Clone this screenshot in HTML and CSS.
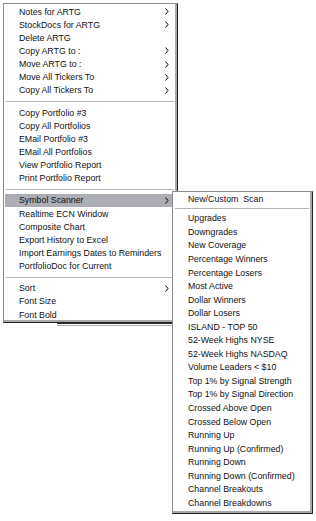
FILE: index.html
```html
<!DOCTYPE html>
<html lang="en">
  <head>
    <meta charset="UTF-8" />
    <meta name="viewport" content="width=device-width, initial-scale=1.0" />
    <title>Portfolio Context Menu</title>
    <link rel="stylesheet" href="styles.css">
  </head>
  <body>
    <div class="screen">
      <div class="backdrop-edge"></div>

      <div class="menu main-menu">
        <div class="item">Notes for ARTG<span class="arrow"><svg width="4" height="7" viewBox="0 0 4 7"><polyline points="0.5,0.5 3,3.5 0.5,6.5" /></svg></span></div>
        <div class="item">StockDocs for ARTG<span class="arrow"><svg width="4" height="7" viewBox="0 0 4 7"><polyline points="0.5,0.5 3,3.5 0.5,6.5" /></svg></span></div>
        <div class="item">Delete ARTG</div>
        <div class="item">Copy ARTG to :<span class="arrow"><svg width="4" height="7" viewBox="0 0 4 7"><polyline points="0.5,0.5 3,3.5 0.5,6.5" /></svg></span></div>
        <div class="item">Move ARTG to :<span class="arrow"><svg width="4" height="7" viewBox="0 0 4 7"><polyline points="0.5,0.5 3,3.5 0.5,6.5" /></svg></span></div>
        <div class="item">Move All Tickers To<span class="arrow"><svg width="4" height="7" viewBox="0 0 4 7"><polyline points="0.5,0.5 3,3.5 0.5,6.5" /></svg></span></div>
        <div class="item">Copy All Tickers To<span class="arrow"><svg width="4" height="7" viewBox="0 0 4 7"><polyline points="0.5,0.5 3,3.5 0.5,6.5" /></svg></span></div>
        <div class="sep"></div>
        <div class="item">Copy Portfolio #3</div>
        <div class="item">Copy All Portfolios</div>
        <div class="item">EMail Portfolio #3</div>
        <div class="item">EMail All Portfolios</div>
        <div class="item">View Portfolio Report</div>
        <div class="item">Print Portfolio Report</div>
        <div class="sep"></div>
        <div class="item active">Symbol Scanner<span class="arrow"><svg width="4" height="7" viewBox="0 0 4 7"><polyline points="0.5,0.5 3,3.5 0.5,6.5" /></svg></span></div>
        <div class="item">Realtime ECN Window</div>
        <div class="item">Composite Chart</div>
        <div class="item">Export History to Excel</div>
        <div class="item">Import Earnings Dates to Reminders</div>
        <div class="item">PortfolioDoc for Current</div>
        <div class="sep"></div>
        <div class="item">Sort<span class="arrow"><svg width="4" height="7" viewBox="0 0 4 7"><polyline points="0.5,0.5 3,3.5 0.5,6.5" /></svg></span></div>
        <div class="item">Font Size</div>
        <div class="item">Font Bold</div>
      </div>

      <div class="menu sub-menu">
        <div class="item keep-spaces">New/Custom  Scan</div>
        <div class="sep"></div>
        <div class="item">Upgrades</div>
        <div class="item">Downgrades</div>
        <div class="item">New Coverage</div>
        <div class="item">Percentage Winners</div>
        <div class="item">Percentage Losers</div>
        <div class="item">Most Active</div>
        <div class="item">Dollar Winners</div>
        <div class="item">Dollar Losers</div>
        <div class="item">ISLAND - TOP 50</div>
        <div class="item">52-Week Highs NYSE</div>
        <div class="item">52-Week Highs NASDAQ</div>
        <div class="item">Volume Leaders &lt; $10</div>
        <div class="item">Top 1% by Signal Strength</div>
        <div class="item">Top 1% by Signal Direction</div>
        <div class="item">Crossed Above Open</div>
        <div class="item">Crossed Below Open</div>
        <div class="item">Running Up</div>
        <div class="item">Running Up (Confirmed)</div>
        <div class="item">Running Down</div>
        <div class="item">Running Down (Confirmed)</div>
        <div class="item">Channel Breakouts</div>
        <div class="item">Channel Breakdowns</div>
      </div>
    </div>
  </body>
</html>
```

FILE: styles.css
```css
body {
  margin: 0;
  background-color: #ffffff;
  font-family: "Liberation Sans", Arial, sans-serif;
  font-size: 8.8px;
  color: #111111;
}
.screen {
  position: relative;
  width: 316px;
  height: 521px;
  overflow: hidden;
}
.backdrop-edge {
  position: absolute;
  left: 57px;
  top: 323px;
  width: 116px;
  height: 1px;
  border-top: 1px solid #303030;
  border-bottom: 1px solid #b0b0b0;
}
.menu {
  box-sizing: border-box;
  background: #ffffff;
  border-top: 1px solid #8c8c8c;
  border-left: 1px solid #8c8c8c;
  border-right: 1px solid #202020;
  border-bottom: 1px solid #202020;
  box-shadow: inset -2px -2px 0 #a8a8a8;
}
.main-menu {
  margin: 3px 0 0 3px;
  width: 175px;
  padding: 1px 0 1px;
}
.sub-menu {
  position: absolute;
  left: 172px;
  top: 191px;
  width: 141px;
  padding: 0 0 3px;
}
.item {
  display: flex;
  align-items: center;
  justify-content: space-between;
  height: 13.15px;
  margin: 0 3px 0 1px;
  padding: 0 5px 0 14px;
  white-space: nowrap;
}
.sub-menu .item {
  height: 13.55px;
}
.keep-spaces {
  white-space: pre;
}
.item.active {
  background-color: #adadb5;
}
.arrow {
  display: flex;
}
.arrow polyline {
  fill: none;
  stroke: #000000;
  stroke-width: 1;
}
.sep {
  height: 9px;
  display: flex;
  align-items: center;
  margin: 0 3px 0 2px;
}
.sep::before {
  content: "";
  flex: 1;
  height: 1px;
  background-color: #b4b4b4;
}
.sub-menu .sep {
  height: 6px;
}
```
